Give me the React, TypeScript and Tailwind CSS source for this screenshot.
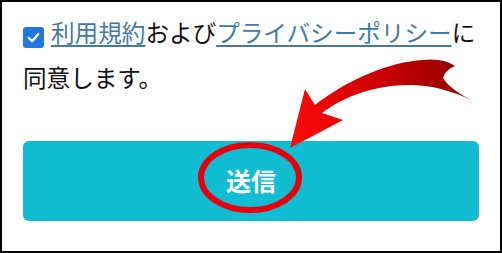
import React from "react";

export default function App() {
  return (
    <div
      className="relative w-[502px] h-[253px] border-2 border-black bg-white overflow-hidden"
      style={{ fontFamily: '"Noto Sans CJK JP", "Noto Sans", sans-serif' }}
    >
      <div className="px-[21px] pt-[8px]">
        <p className="text-[23.6px] leading-[45px] text-[#111]">
          <span className="inline-flex items-center justify-center w-[21px] h-[21px] rounded-[3px] bg-[#1f78e0] mr-[7px] align-[-3px]">
            <svg width="15" height="15" viewBox="0 0 16 16">
              <path
                d="M3 8.5 L6.5 12 L13 4.5"
                fill="none"
                stroke="#fff"
                strokeWidth="2.6"
                strokeLinecap="round"
                strokeLinejoin="round"
              />
            </svg>
          </span>
          <a className="text-[#3f7ba6] underline decoration-2 underline-offset-[3px]">利用規約</a>
          および
          <a className="text-[#3f7ba6] underline decoration-2 underline-offset-[3px]">プライバシーポリシー</a>
          に同意します。
        </p>
        <button className="mt-[41px] w-full h-[80px] rounded-[6px] bg-[#10bdd3] text-white text-[25px] font-bold flex items-center justify-center">
          送信
        </button>
      </div>
      <svg
        className="absolute left-[-2px] top-[-2px] pointer-events-none"
        width="502"
        height="253"
        viewBox="0 0 502 253"
      >
        <defs>
          <linearGradient id="arrowGrad" gradientUnits="userSpaceOnUse" x1="295" y1="140" x2="470" y2="70">
            <stop offset="0" stopColor="#ff0a0a" />
            <stop offset="0.5" stopColor="#d00000" />
            <stop offset="1" stopColor="#8e0000" />
          </linearGradient>
        </defs>
        <ellipse cx="250" cy="177.5" rx="49" ry="32.5" fill="none" stroke="#e8000a" strokeWidth="6" />
        <path
          d="M 455 66 Q 443 58 423 60 C 390 62 350 78 315 105 L 305 89 L 290 148 L 343 120 L 322 113 C 345 95 380 84 413 85 C 440 86 462 95 477 103 Q 450 90 443 78 Q 445 70 455 66 Z"
          fill="url(#arrowGrad)"
        />
      </svg>
    </div>
  );
}
